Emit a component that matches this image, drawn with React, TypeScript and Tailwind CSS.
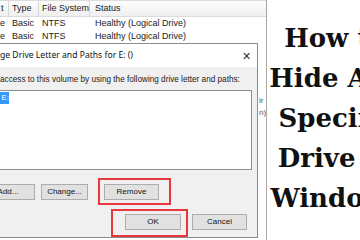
const headline = ["How to", "Hide Any", "Specific", "Drive in", "Windows"];

const rows = [
  { a: "e", type: "Basic", fs: "NTFS", status: "Healthy (Logical Drive)" },
  { a: "e", type: "Basic", fs: "NTFS", status: "Healthy (Logical Drive)" },
];

function WinButton({ label, className = "" }: { label: string; className?: string }) {
  return (
    <div
      className={`h-[16px] shrink-0 flex items-center justify-center bg-[#e1e1e1] border border-[#adadad] text-[8px] text-[#111] ${className}`}
    >
      {label}
    </div>
  );
}

export default function App() {
  return (
    <div className="w-[360px] h-[240px] overflow-hidden flex bg-white">
      {/* ── Screenshot of Disk Management ── */}
      <div className="relative w-[267px] h-full shrink-0 border-r border-[#a8a8a8] flex flex-col overflow-hidden font-['Liberation_Sans',Arial,sans-serif] text-[#1a1a1a]">
        {/* volume list header */}
        <div className="h-[17px] shrink-0 grid grid-cols-[9px_30px_51px_1fr] bg-gradient-to-b from-[#fdfdfd] to-[#efefef] border-t border-b border-[#dcdcdc] text-[9px]">
          <div className="flex items-center pl-[1px] border-r border-[#d5d5d5]">t</div>
          <div className="flex items-center pl-[3px] border-r border-[#d5d5d5]">Type</div>
          <div className="flex items-center pl-[3px] border-r border-[#d5d5d5]">File System</div>
          <div className="flex items-center pl-[5px]">Status</div>
        </div>
        {rows.map((r, i) => (
          <div key={i} className="h-[13px] shrink-0 grid grid-cols-[9px_30px_51px_1fr] items-center text-[9px]">
            <div>{r.a}</div>
            <div className="pl-[3px]">{r.type}</div>
            <div className="pl-[3px]">{r.fs}</div>
            <div className="pl-[5px]">{r.status}</div>
          </div>
        ))}

        {/* dialog + window behind it */}
        <div className="flex flex-1 min-h-0">
          <div className="w-[258px] shrink-0 flex flex-col border-t border-r border-b border-[#8c8c8c] bg-[#f0f0f0] mb-[2px]">
            <div className="h-[23px] shrink-0 bg-white flex items-center justify-between pr-[6px] font-['Noto_Sans',sans-serif] text-[8.6px] text-[#111]">
              <span>ge Drive Letter and Paths for E: ()</span>
              <span className="text-[11px] leading-none text-[#333] font-light">✕</span>
            </div>
            <div className="pt-[8px] text-[8.2px] leading-[10px]">
              access to this volume by using the following drive letter and paths:
            </div>
            <div className="mt-[5px] mr-[5px] h-[80px] shrink-0 bg-white border-t border-r border-b border-[#8a8f98] pt-[1px]">
              <div className="w-[9px] h-[12px] bg-[#3399ff] overflow-hidden flex items-center justify-end text-[8px] text-white">
                E:
              </div>
            </div>
            <div className="mt-[14px] flex items-center">
              <WinButton label="Add..." className="w-[54px] ml-[-19px]" />
              <WinButton label="Change..." className="w-[47px] ml-[6px]" />
              <WinButton label="Remove" className="w-[55px] ml-[16px]" />
            </div>
            <div className="mt-[14px] flex items-center">
              <WinButton label="OK" className="w-[56px] ml-[125px]" />
              <WinButton label="Cancel" className="w-[55px] ml-[11px] border-[#0078d7]" />
            </div>
          </div>
          <div className="flex-1 flex flex-col pt-[52px] pl-[1px] text-[8px] leading-[12px] text-[#555] overflow-hidden">
            <span>ir</span>
            <span>n)</span>
          </div>
        </div>

        {/* red highlight annotations */}
        <div className="absolute left-[98px] top-[178px] w-[73px] h-[27px] border-2 border-[#e8383d]" />
        <div className="absolute left-[111px] top-[209px] w-[77px] h-[28px] border-2 border-[#e8383d]" />
      </div>

      {/* ── Headline ── */}
      <div className="w-[137px] shrink-0 pt-[18px] flex flex-col items-center font-['DejaVu_Serif',serif] font-bold text-[26px] leading-[40px] text-[#111] whitespace-nowrap">
        {headline.map((l) => (
          <span key={l}>{l}</span>
        ))}
      </div>
    </div>
  );
}
